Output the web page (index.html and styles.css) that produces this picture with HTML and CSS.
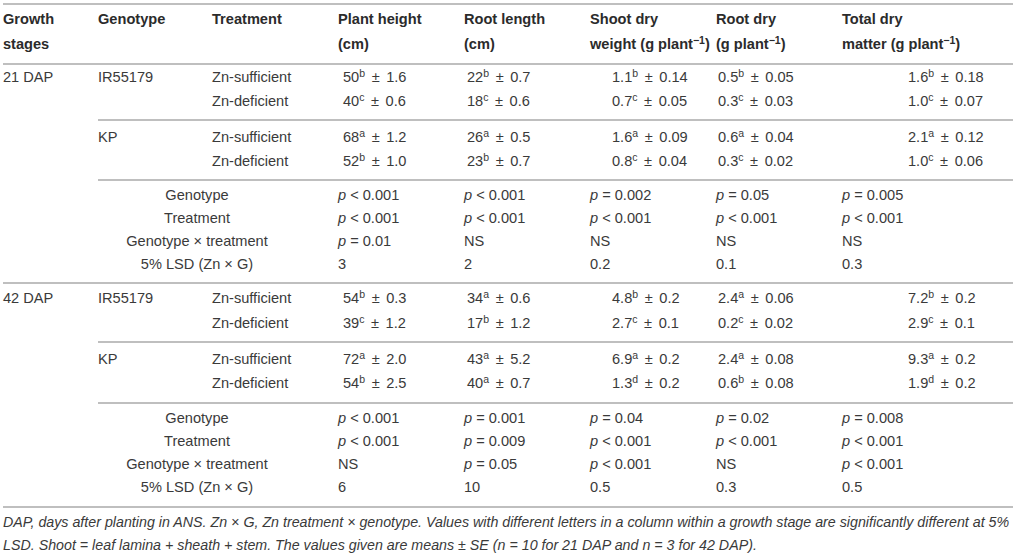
FILE: index.html
```html
<!DOCTYPE html>
<html lang="en">
<head>
  <meta charset="UTF-8" />
  <title>Growth and dry matter of rice genotypes under Zn supply</title>
  <link rel="stylesheet" href="styles.css">
</head>
<body>
  <table class="data">
    <colgroup>
      <col class="w-stage"><col class="w-geno"><col class="w-treat">
      <col class="w-num"><col class="w-num"><col class="w-num"><col class="w-num"><col>
    </colgroup>
    <thead>
      <tr>
        <th>Growth<br>stages</th>
        <th>Genotype</th>
        <th>Treatment</th>
        <th>Plant height<br>(cm)</th>
        <th>Root length<br>(cm)</th>
        <th>Shoot dry<br>weight (g plant<sup>&minus;1</sup>)</th>
        <th>Root dry<br>(g plant<sup>&minus;1</sup>)</th>
        <th>Total dry<br>matter (g plant<sup>&minus;1</sup>)</th>
      </tr>
    </thead>

    <tbody class="stage-21">
      <tr class="lead">
        <td rowspan="8">21 DAP</td>
        <td rowspan="2">IR55179</td>
        <td>Zn-sufficient</td>
        <td class="m4">50<sup>b</sup> &plusmn; 1.6</td>
        <td class="m5">22<sup>b</sup> &plusmn; 0.7</td>
        <td class="m6">1.1<sup>b</sup> &plusmn; 0.14</td>
        <td class="m7">0.5<sup>b</sup> &plusmn; 0.05</td>
        <td class="m8">1.6<sup>b</sup> &plusmn; 0.18</td>
      </tr>
      <tr class="last">
        <td>Zn-deficient</td>
        <td class="m4">40<sup>c</sup> &plusmn; 0.6</td>
        <td class="m5">18<sup>c</sup> &plusmn; 0.6</td>
        <td class="m6">0.7<sup>c</sup> &plusmn; 0.05</td>
        <td class="m7">0.3<sup>c</sup> &plusmn; 0.03</td>
        <td class="m8">1.0<sup>c</sup> &plusmn; 0.07</td>
      </tr>
      <tr class="first sep">
        <td rowspan="2">KP</td>
        <td>Zn-sufficient</td>
        <td class="m4">68<sup>a</sup> &plusmn; 1.2</td>
        <td class="m5">26<sup>a</sup> &plusmn; 0.5</td>
        <td class="m6">1.6<sup>a</sup> &plusmn; 0.09</td>
        <td class="m7">0.6<sup>a</sup> &plusmn; 0.04</td>
        <td class="m8">2.1<sup>a</sup> &plusmn; 0.12</td>
      </tr>
      <tr class="last">
        <td>Zn-deficient</td>
        <td class="m4">52<sup>b</sup> &plusmn; 1.0</td>
        <td class="m5">23<sup>b</sup> &plusmn; 0.7</td>
        <td class="m6">0.8<sup>c</sup> &plusmn; 0.04</td>
        <td class="m7">0.3<sup>c</sup> &plusmn; 0.02</td>
        <td class="m8">1.0<sup>c</sup> &plusmn; 0.06</td>
      </tr>
      <tr class="first sep stat">
        <td colspan="2" class="factor">Genotype</td>
        <td><i>p</i> &lt; 0.001</td>
        <td><i>p</i> &lt; 0.001</td>
        <td><i>p</i> = 0.002</td>
        <td><i>p</i> = 0.05</td>
        <td><i>p</i> = 0.005</td>
      </tr>
      <tr class="stat">
        <td colspan="2" class="factor">Treatment</td>
        <td><i>p</i> &lt; 0.001</td>
        <td><i>p</i> &lt; 0.001</td>
        <td><i>p</i> &lt; 0.001</td>
        <td><i>p</i> &lt; 0.001</td>
        <td><i>p</i> &lt; 0.001</td>
      </tr>
      <tr class="stat">
        <td colspan="2" class="factor">Genotype &times; treatment</td>
        <td><i>p</i> = 0.01</td>
        <td>NS</td>
        <td>NS</td>
        <td>NS</td>
        <td>NS</td>
      </tr>
      <tr class="last stat">
        <td colspan="2" class="factor">5% LSD (Zn &times; G)</td>
        <td>3</td>
        <td>2</td>
        <td>0.2</td>
        <td>0.1</td>
        <td>0.3</td>
      </tr>
    </tbody>

    <tbody class="stage-42">
      <tr class="lead">
        <td rowspan="8">42 DAP</td>
        <td rowspan="2">IR55179</td>
        <td>Zn-sufficient</td>
        <td class="m4">54<sup>b</sup> &plusmn; 0.3</td>
        <td class="m5">34<sup>a</sup> &plusmn; 0.6</td>
        <td class="m6">4.8<sup>b</sup> &plusmn; 0.2</td>
        <td class="m7">2.4<sup>a</sup> &plusmn; 0.06</td>
        <td class="m8">7.2<sup>b</sup> &plusmn; 0.2</td>
      </tr>
      <tr class="last">
        <td>Zn-deficient</td>
        <td class="m4">39<sup>c</sup> &plusmn; 1.2</td>
        <td class="m5">17<sup>b</sup> &plusmn; 1.2</td>
        <td class="m6">2.7<sup>c</sup> &plusmn; 0.1</td>
        <td class="m7">0.2<sup>c</sup> &plusmn; 0.02</td>
        <td class="m8">2.9<sup>c</sup> &plusmn; 0.1</td>
      </tr>
      <tr class="first sep">
        <td rowspan="2">KP</td>
        <td>Zn-sufficient</td>
        <td class="m4">72<sup>a</sup> &plusmn; 2.0</td>
        <td class="m5">43<sup>a</sup> &plusmn; 5.2</td>
        <td class="m6">6.9<sup>a</sup> &plusmn; 0.2</td>
        <td class="m7">2.4<sup>a</sup> &plusmn; 0.08</td>
        <td class="m8">9.3<sup>a</sup> &plusmn; 0.2</td>
      </tr>
      <tr class="last">
        <td>Zn-deficient</td>
        <td class="m4">54<sup>b</sup> &plusmn; 2.5</td>
        <td class="m5">40<sup>a</sup> &plusmn; 0.7</td>
        <td class="m6">1.3<sup>d</sup> &plusmn; 0.2</td>
        <td class="m7">0.6<sup>b</sup> &plusmn; 0.08</td>
        <td class="m8">1.9<sup>d</sup> &plusmn; 0.2</td>
      </tr>
      <tr class="first sep stat">
        <td colspan="2" class="factor">Genotype</td>
        <td><i>p</i> &lt; 0.001</td>
        <td><i>p</i> = 0.001</td>
        <td><i>p</i> = 0.04</td>
        <td><i>p</i> = 0.02</td>
        <td><i>p</i> = 0.008</td>
      </tr>
      <tr class="stat">
        <td colspan="2" class="factor">Treatment</td>
        <td><i>p</i> &lt; 0.001</td>
        <td><i>p</i> = 0.009</td>
        <td><i>p</i> &lt; 0.001</td>
        <td><i>p</i> &lt; 0.001</td>
        <td><i>p</i> &lt; 0.001</td>
      </tr>
      <tr class="stat">
        <td colspan="2" class="factor">Genotype &times; treatment</td>
        <td>NS</td>
        <td><i>p</i> = 0.05</td>
        <td><i>p</i> &lt; 0.001</td>
        <td>NS</td>
        <td><i>p</i> &lt; 0.001</td>
      </tr>
      <tr class="last stat">
        <td colspan="2" class="factor">5% LSD (Zn &times; G)</td>
        <td>6</td>
        <td>10</td>
        <td>0.5</td>
        <td>0.3</td>
        <td>0.5</td>
      </tr>
    </tbody>
  </table>

  <p class="note">
    DAP, days after planting in ANS. Zn &times; G, Zn treatment &times; genotype. Values with different letters in a column within a growth stage are significantly different at 5%<br>
    LSD. Shoot = leaf lamina + sheath + stem. The values given are means &plusmn; SE (n = 10 for 21 DAP and n = 3 for 42 DAP).
  </p>
</body>
</html>
```

FILE: styles.css
```css
body {
  margin: 0;
  padding: 3px 3px 0 3px;
  background-color: #ffffff;
  color: #3a3a3a;
  font-family: 'Liberation Sans', Arial, sans-serif;
  font-size: 14.6px;
}

.data {
  width: 1010px;
  border-collapse: collapse;
  table-layout: fixed;
  border-top: 2px solid #bfbfbf;
  border-bottom: 2px solid #bfbfbf;
}

.w-stage { width: 95px; }
.w-geno { width: 114px; }
.w-treat { width: 126px; }
.w-num { width: 126px; }

th, td {
  padding: 0;
  text-align: left;
  vertical-align: top;
  white-space: nowrap;
  line-height: 24px;
}

th {
  font-weight: bold;
  color: #2b2b2b;
  line-height: 25px;
  padding-top: 2px;
  padding-bottom: 6px;
}

thead tr {
  border-bottom: 2px solid #bfbfbf;
}

tbody + tbody {
  border-top: 2px solid #bfbfbf;
}

sup {
  font-size: 72%;
  line-height: 0;
  vertical-align: 0.45em;
}

tr.stat td { line-height: 23px; }
.stage-42 tr:not(.stat) td { line-height: 24.5px; }

.stage-21 tr.lead td { padding-top: 0; }
.stage-42 tr.lead td { padding-top: 2px; }
tr.first td { padding-top: 4px; }
tr.first.stat td { padding-top: 3px; }
.stage-42 tr.first td { padding-top: 3.5px; }
.stage-42 tr.first.stat td { padding-top: 3.5px; }
tr.last td { padding-bottom: 6px; }
.stage-42 tr.last.stat td { padding-bottom: 6.5px; }

tr.sep td {
  border-top: 2px solid #bfbfbf;
}

.factor {
  text-align: center;
  padding-right: 42px;
}

.m4, .m5, .m6, .m7, .m8 { word-spacing: 2.5px; }

.m4 { padding-left: 5px; }
.m5 { padding-left: 3px; }
.m6 { padding-left: 22px; }
.m7 { padding-left: 2px; }
.m8 { padding-left: 66px; }

.note {
  margin: 3px 0 0 0;
  font-family: 'Liberation Sans Narrow', 'Liberation Sans', sans-serif;
  font-style: italic;
  font-size: 14.25px;
  line-height: 23px;
  color: #3a3a3a;
  white-space: nowrap;
}
```
